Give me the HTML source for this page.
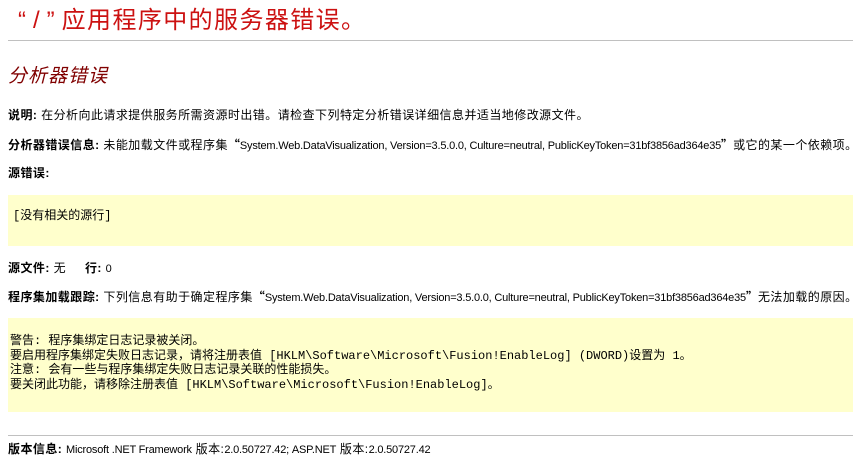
<!DOCTYPE html>
<html><head><meta charset="utf-8"><style>
body{margin:0;width:853px;height:459px;background:#fff;overflow:hidden;position:relative;font-family:"Liberation Sans","Noto Sans CJK SC",sans-serif;color:#000}
.a{position:absolute;white-space:nowrap;font-size:12px;line-height:14px;letter-spacing:0.45px}
.l{font-size:11px;letter-spacing:-0.2px}
.q{font-family:"Noto Sans CJK SC",sans-serif;font-weight:bold;letter-spacing:0}
b{font-weight:bold}
.hr{position:absolute;left:8px;right:0;height:1px;background:#c0c0c0}
.y{position:absolute;left:8px;right:0;background:#ffffcc}
.m{font-family:"Liberation Mono","Noto Sans CJK SC",monospace;font-size:12px;line-height:14.5px;letter-spacing:0}
</style></head><body>
<div class="a" style="left:18px;top:7px;font-size:24px;line-height:28px;color:#cc1111;letter-spacing:1.4px"><span style="letter-spacing:7px">“/”</span>应用程序中的服务器错误。</div>
<div class="hr" style="top:40px"></div>
<div class="a" style="left:8px;top:65px;font-size:19px;line-height:24px;color:#800000;font-style:italic;letter-spacing:1px">分析器错误</div>
<div class="a" style="left:8px;top:108px"><b>说明:</b> 在分析向此请求提供服务所需资源时出错。请检查下列特定分析错误详细信息并适当地修改源文件。</div>
<div class="a" style="left:8px;top:138px"><b>分析器错误信息:</b> 未能加载文件或程序集<span class="q">“</span><span class="l">System.Web.DataVisualization, Version=3.5.0.0, Culture=neutral, PublicKeyToken=31bf3856ad364e35</span><span class="q">”</span>或它的某一个依赖项。</div>
<div class="a" style="left:8px;top:166px"><b>源错误:</b></div>
<div class="y" style="top:195px;height:51px"></div>
<div class="a m" style="left:13px;top:209px">[没有相关的源行]</div>
<div class="a" style="left:8px;top:261px"><b>源文件:</b> 无 &nbsp;&nbsp;&nbsp; <b>行:</b> <span class="l">0</span></div>
<div class="a" style="left:8px;top:290px"><b>程序集加载跟踪:</b> 下列信息有助于确定程序集<span class="q">“</span><span class="l">System.Web.DataVisualization, Version=3.5.0.0, Culture=neutral, PublicKeyToken=31bf3856ad364e35</span><span class="q">”</span>无法加载的原因。</div>
<div class="y" style="top:318px;height:94px"></div>
<div class="a m" style="left:10px;top:334px">警告: 程序集绑定日志记录被关闭。<br>要启用程序集绑定失败日志记录，请将注册表值 [HKLM\Software\Microsoft\Fusion!EnableLog] (DWORD)设置为 1。<br>注意: 会有一些与程序集绑定失败日志记录关联的性能损失。<br>要关闭此功能，请移除注册表值 [HKLM\Software\Microsoft\Fusion!EnableLog]。</div>
<div class="hr" style="top:435px"></div>
<div class="a" style="left:8px;top:442px"><b>版本信息:</b> <span class="l">Microsoft .NET Framework</span> 版本:<span class="l">2.0.50727.42; ASP.NET</span> 版本:<span class="l">2.0.50727.42</span></div>
</body></html>
